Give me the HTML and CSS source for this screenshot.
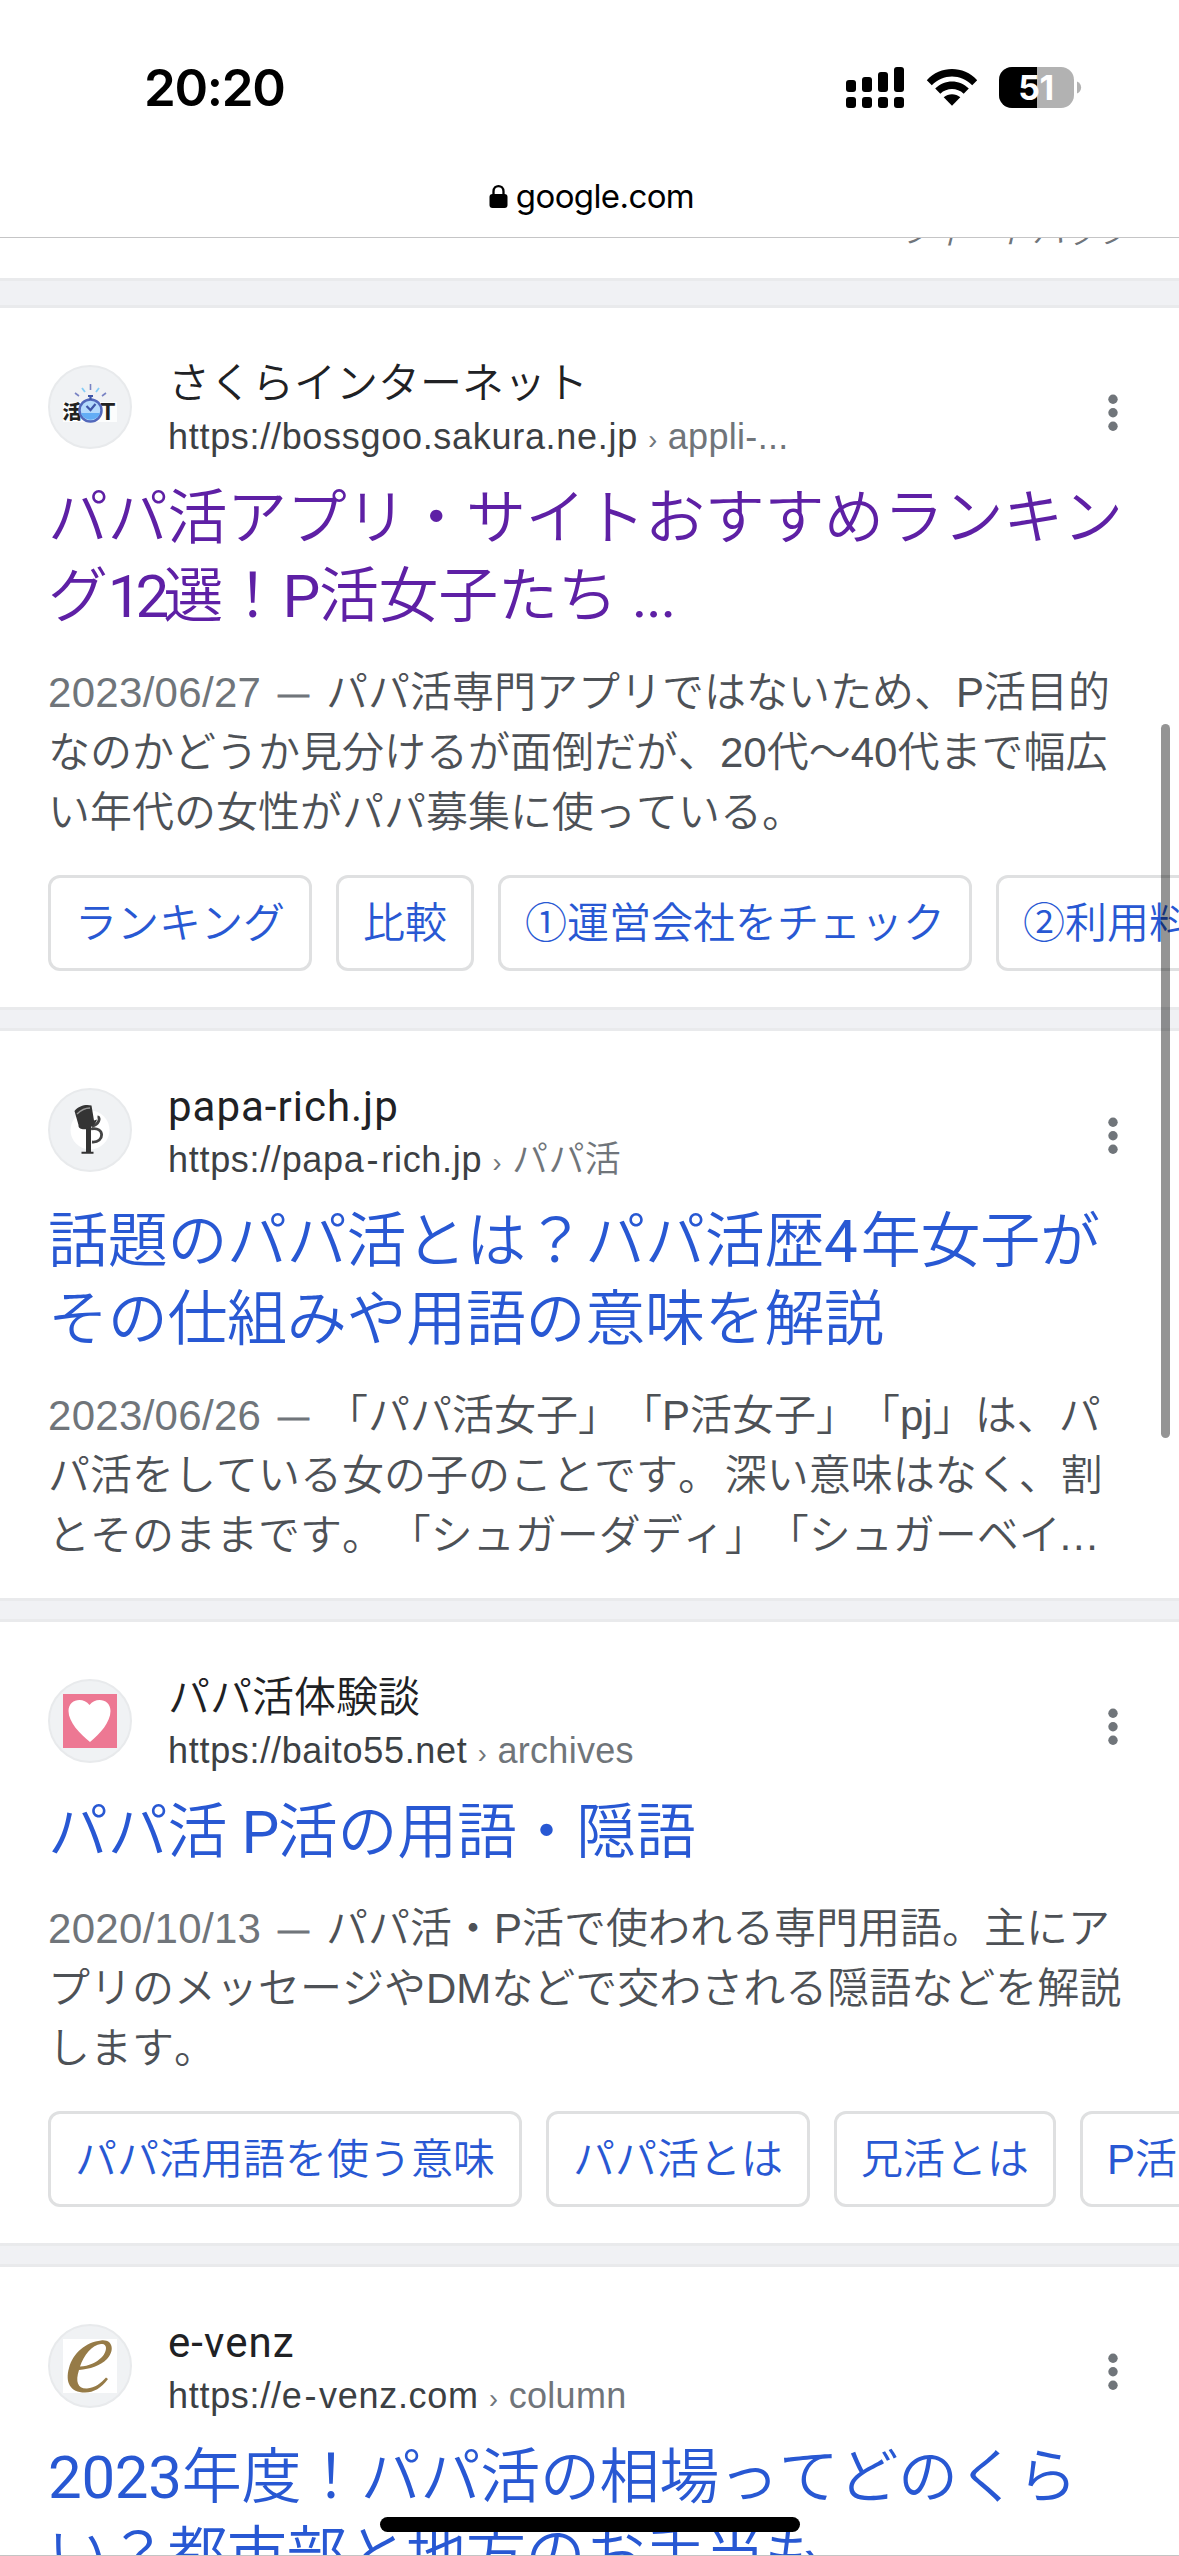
FILE: index.html
```html
<!DOCTYPE html>
<html lang="ja">
<head>
<meta charset="utf-8">
<title>google.com</title>
<link rel="stylesheet" href="styles.css">
</head>
<body>
<svg class="defs" width="0" height="0">
  <symbol id="dots" viewBox="0 0 10 38"><circle cx="5" cy="5.2" r="4.7"/><circle cx="5" cy="18.8" r="4.7"/><circle cx="5" cy="32.3" r="4.7"/></symbol>
</svg>
<div class="screen">
  <header class="browser">
    <div class="status">
      <span class="time">20:20</span>
      <div class="status-icons">
        <svg class="signal" width="58" height="42" viewBox="0 0 58 42">
          <rect x="0" y="13" width="10" height="12" rx="3"/><rect x="16" y="10" width="10" height="15" rx="3"/><rect x="32" y="5" width="10" height="20" rx="3"/><rect x="48" y="0" width="10" height="25" rx="3"/>
          <rect x="0" y="30" width="10" height="11" rx="3"/><rect x="16" y="30" width="10" height="11" rx="3"/><rect x="32" y="30" width="10" height="11" rx="3"/><rect x="48" y="30" width="10" height="11" rx="3"/>
        </svg>
        <svg class="wifi" width="52" height="42" viewBox="0 0 52 42">
          <path d="M.8 13.2C14.5-1.6 37.5-1.6 51.2 13.2L46.2 18.3C35 6.500 17 6.500 5.800 18.300Z"/>
          <path d="M9.200 21.600C18.500 12.200 33.500 12.200 42.800 21.600L37.700 26.700C31 20.500 21 20.500 14.300 26.700Z"/>
          <path d="M17.700 30.200C22.500 26.300 29.500 26.300 34.300 30.200L26 38.800Z"/>
        </svg>
        <svg class="battery" width="83" height="42" viewBox="0 0 83 42">
          <defs><clipPath id="cell"><rect width="75" height="41" rx="13"/></clipPath></defs>
          <g clip-path="url(#cell)"><rect width="75" height="41" fill="#b2b2b2"/><rect width="38" height="41"/></g>
          <path d="M78 14.500c5.500 2.200 5.500 9.800 0 12Z" fill="#b2b2b2"/>
          <text x="37" y="33" text-anchor="middle" class="charge">51</text>
        </svg>
      </div>
    </div>
    <div class="address">
      <svg width="19" height="25" viewBox="0 0 19 25"><rect x=".5" y="10" width="18" height="14" rx="3"/><path d="M4.500 12V7.500C4.500.2 14.500.2 14.500 7.500V12" fill="none" stroke="#000" stroke-width="2.300"/></svg>
      <span>google.com</span>
    </div>
  </header>

  <div class="feedback"><span>フィードバック</span></div>

  <main>
    <article class="card first">
      <div class="source">
        <svg class="favicon" viewBox="0 0 84 84">
          <circle cx="42" cy="42" r="41"/>
          <path d="M15 37H69V57H15Z" fill="#fff" opacity=".8"/>
          <text x="14.500" y="54" class="mark-text">活</text><text x="52.500" y="55" class="mark-text t">T</text>
          <circle cx="42.500" cy="45.500" r="11" fill="#b4dafc" stroke="#5268bb" stroke-width="2.500"/>
          <path d="M33 48a9.700 8.500 0 0 0 19 0Z" fill="#62adf5"/>
          <path d="M40 31h5M42.500 31v4M38.500 41l4 4 5-6" fill="none" stroke="#4057a8" stroke-width="2.200"/>
          <path d="M42.500 19v6M27 28l4 3M58 28l-4 3" stroke="#7983c4" stroke-width="1.600"/><path d="M34 23l3 4M51 23l-3 4" stroke="#85cdf7" stroke-width="1.800"/>
        </svg>
        <div class="site">
          <div class="name">さくらインターネット</div>
          <div class="url">https://bossgoo.sakura.ne.jp<span class="crumb"> <i>›</i> appli-...</span></div>
        </div>
        <svg class="menu"><use href="#dots"/></svg>
      </div>
      <h3 class="title visited">パパ活アプリ・サイトおすすめランキン<br>グ<span class="latin tight">12</span>選！<span class="latin cap">P</span>活女子たち <span class="latin cap">...</span></h3>
      <p class="snippet"><span class="date">2023/06/27</span><span class="dash">—</span>パパ活専門アプリではないため、P活目的<br>なのかどうか見分けるが面倒だが、20代〜40代まで幅広<br>い年代の女性がパパ募集に使っている。</p>
      <div class="chips"><a>ランキング</a><a>比較</a><a>①運営会社をチェック</a><a>②利用料金</a></div>
    </article>

    <article class="card">
      <div class="source">
        <svg class="favicon" viewBox="0 0 84 84">
          <circle cx="42" cy="42" r="41"/><circle cx="42" cy="42" r="19.500" class="plain"/>
          <path d="M38 38h5v27h-5ZM33.500 63.700h12v2.100h-12Z" fill="#333"/>
          <path d="M44 38c7-1 9-9 5.500-9M43 41c14-3 14 14 1 13" fill="none" stroke="#444" stroke-width="2.800"/>
          <path d="M26.500 23C31 17 39 16 43.500 17.500L46 32.500L49 31.500C48 36 44 39 39 41C35 42 30 41 30.500 37Z" fill="#343434"/>
          <path d="M29 26c5-5 9-6 13-6" fill="none" stroke="#999" stroke-width="1.300"/>
        </svg>
        <div class="site">
          <div class="name latin">papa-rich.jp</div>
          <div class="url">https://papa<span class="hyphen">-</span>rich.jp<span class="crumb"> <i>›</i> パパ活</span></div>
        </div>
        <svg class="menu"><use href="#dots"/></svg>
      </div>
      <h3 class="title">話題のパパ活とは？パパ活歴<span class="latin four">4</span>年女子が<br>その仕組みや用語の意味を解説</h3>
      <p class="snippet"><span class="date">2023/06/26</span><span class="dash">—</span>「パパ活女子」「P活女子」「pj」は、パ<br>パ活をしている女の子のことです。<span class="close"> </span>深い意味はなく、割<br>とそのままです。<span class="close"> </span>「シュガーダディ」「シュガーベイ<span class="more">…</span></p>
    </article>

    <article class="card">
      <div class="source">
        <svg class="favicon" viewBox="0 0 84 84">
          <circle cx="42" cy="42" r="41"/><rect x="15" y="15" width="54" height="54" fill="#ed7893"/>
          <path d="M42 63C32 55 20.500 43 20.500 32C20.500 20 35 17.500 41.500 26C48 17.500 62.500 20 62.500 32C62.500 43 52 55 42 63Z" fill="#fff"/>
        </svg>
        <div class="site">
          <div class="name">パパ活体験談</div>
          <div class="url">https://baito55.net<span class="crumb"> <i>›</i> archives</span></div>
        </div>
        <svg class="menu"><use href="#dots"/></svg>
      </div>
      <h3 class="title">パパ活 <span class="latin cap">P</span>活の用語・隠語</h3>
      <p class="snippet"><span class="date">2020/10/13</span><span class="dash">—</span>パパ活・P活で使われる専門用語。主にア<br>プリのメッセージやDMなどで交わされる隠語などを解説<br>します。</p>
      <div class="chips"><a>パパ活用語を使う意味</a><a>パパ活とは</a><a>兄活とは</a><a>P活とは</a></div>
    </article>

    <article class="card">
      <div class="source">
        <svg class="favicon" viewBox="0 0 84 84">
          <circle cx="42" cy="42" r="41"/><rect x="15" y="15" width="54" height="54" fill="#fff"/>
          <path fill-rule="evenodd" d="M53 16.500C65 15 67 27 59 35C52 42 42 45 31 46C27 58 30 65 39 64.500C47 64 53 59 58 53.500L60 55C53 64 46 68.500 37 68.500C22 68.500 17 58 21 44C25 29 38 18 53 16.500ZM32 42.500C41 42 48 39 54 33C60 26 59 19 53 20C44 21 36 31 32 42.500Z" fill="#967b47"/>
        </svg>
        <div class="site">
          <div class="name latin">e-venz</div>
          <div class="url">https://e<span class="hyphen">-</span>venz.com<span class="crumb"> <i>›</i> column</span></div>
        </div>
        <svg class="menu"><use href="#dots"/></svg>
      </div>
      <h3 class="title"><span class="latin">2023</span>年度！パパ活の相場ってどのくら<br>い？都市部と地方のお手当も</h3>
    </article>
  </main>
  <div class="scrollbar"></div>
  <div class="home-indicator"></div>
</div>
</body>
</html>
```

FILE: styles.css
```css
* { box-sizing: border-box; }
body { margin: 0; background: #fff; }
.defs { display: block; }
.screen {
  position: relative;
  width: 1179px;
  height: 2556px;
  overflow: hidden;
  background: #fff;
  border-bottom: 1px solid #c4c4c4;
  font-family: "Liberation Sans", "Noto Sans CJK JP", sans-serif;
  font-weight: 350;
  white-space: nowrap;
  text-spacing-trim: space-all;
  font-kerning: none;
}

.browser { height: 238px; border-bottom: 1px solid #c5c5c6; font-family: Inter, sans-serif; color: #000; }
.status { display: flex; justify-content: space-between; height: 150px; padding: 58px 97px 0 144px; }
.time { font-size: 51px; font-weight: 600; line-height: 60px; letter-spacing: -1.3px; }
.status-icons { display: flex; align-items: flex-start; padding-top: 9px; }
.wifi { margin-left: 22px; }
.battery { margin-left: 21px; }
.charge { font: 700 34px Inter, sans-serif; fill: #fff; letter-spacing: -.5px; }
.address { display: flex; justify-content: center; align-items: center; gap: 8px; height: 92px; padding-left: 4px; font-size: 33px; font-weight: 400; letter-spacing: -.6px; }

.feedback { display: flex; justify-content: flex-end; height: 40px; padding-right: 48px; overflow: hidden; }
.feedback span { margin-top: -30px; height: 48px; font-size: 33px; line-height: 48px; font-style: italic; color: #70757a; }

.card { position: relative; padding: 50px 0 0 48px; border-top: 24px solid #f0f1f4; }
.card.first { border-top-width: 30px; }
.card::before, .card::after { content: ""; position: absolute; left: 0; right: 0; height: 3px; background: #e9eaec; }
.card::before { top: -3px; }
.card::after { top: -24px; }
.card.first::after { top: -30px; }

.source { display: flex; height: 104px; padding-right: 61px; }
.favicon { width: 84px; height: 84px; margin: 7px 36px 0 0; flex: none; }
.favicon > circle:first-child { fill: #f0f2f4; stroke: #e8eaec; stroke-width: 2; }
.favicon > .plain { fill: #fff; }
.mark-text { font: 900 19px "Noto Sans CJK JP", sans-serif; fill: #222; }
.mark-text.t { font: 700 24px "Liberation Sans", sans-serif; }
.site { flex: 1; min-width: 0; }
.name { font-family: Roboto, "Noto Sans CJK JP", sans-serif; font-size: 42px; line-height: 52px; color: #202124; }
.name.latin { letter-spacing: 1px; }
.latin { font-weight: 400; }
.url { margin-top: 2px; font-size: 36px; line-height: 50px; color: #3c4043; letter-spacing: .7px; }
.hyphen { padding: 0 2px; }
.crumb { color: #70757a; letter-spacing: .3px; }
.crumb i { font-style: normal; font-size: 27px; }
.menu { width: 10px; height: 38px; margin-top: 36px; fill: #70757a; flex: none; }

.title { margin: 17.5px 0 0; font-family: Roboto, "Noto Sans CJK JP", sans-serif; font-size: 60px; line-height: 78px; font-weight: inherit; letter-spacing: -.3px; color: #2858d3; }
.title.visited { color: #5e20a5; }
.tight { letter-spacing: -6px; }
.cap { letter-spacing: -1.5px; }
.four { letter-spacing: 3px; }

.snippet { margin: 27.5px 0 32px; font-size: 42px; line-height: 60px; color: #4d5156; }
.date { display: inline-block; width: 213px; letter-spacing: .3px; color: #70757a; }
.dash { display: inline-block; width: 65px; text-align: center; font-size: 31px; line-height: 1; vertical-align: 3px; color: #70757a; -webkit-text-stroke: .8px #70757a; }
.close { word-spacing: -7px; }
.more { letter-spacing: -3px; margin-left: -3px; }

.chips { display: flex; gap: 24px; padding-bottom: 36px; width: 1131px; overflow: hidden; }
.chips a { flex: none; height: 96px; padding: 0 24px; border: 3px solid #dfe0e1; border-radius: 12px; font-size: 42px; line-height: 91px; color: #2858d3; }

.scrollbar { position: absolute; left: 1161px; top: 724px; width: 9px; height: 714px; border-radius: 4.5px; background: rgba(0, 0, 0, .42); }
.home-indicator { position: absolute; left: 380px; top: 2517px; width: 420px; height: 15px; border-radius: 8px; background: #000; }
```
